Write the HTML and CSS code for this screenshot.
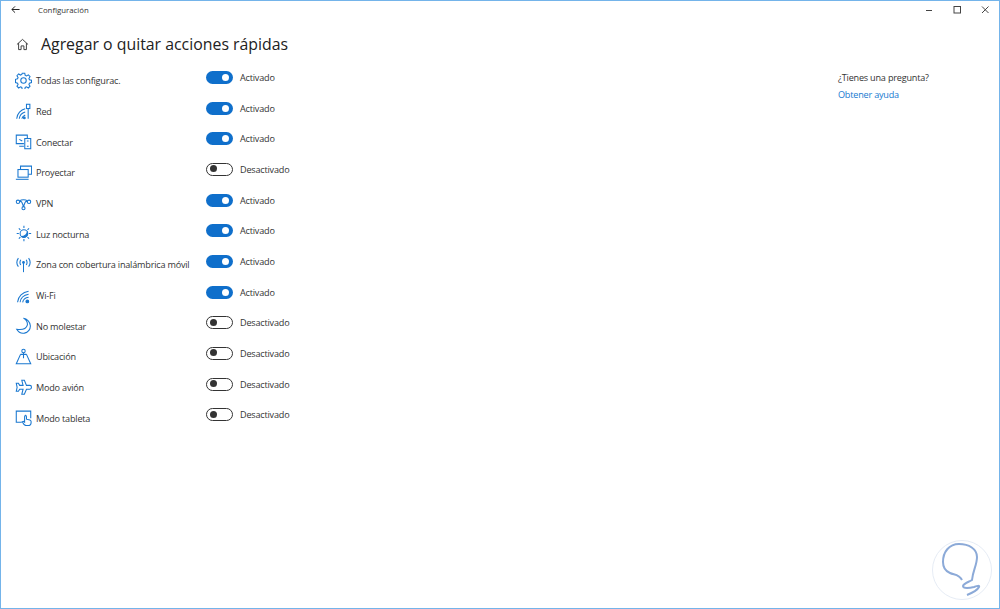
FILE: index.html
```html
<!DOCTYPE html>
<html lang="es">
<head>
<meta charset="utf-8">
<title>Configuración</title>
<link rel="stylesheet" href="styles.css">
</head>
<body>
<div class="window">
  <header class="titlebar">
    <svg class="back" viewBox="0 0 10 10"><path d="M9.500 5H1M4.500 1.500 1 5l3.500 3.500"/></svg>
    <span class="apptitle">Configuración</span>
    <div class="controls">
      <svg viewBox="0 0 8 8"><path d="M1 4.500h6"/></svg>
      <svg viewBox="0 0 8 8"><rect x="1" y=".5" width="6.500" height="6.500"/></svg>
      <svg viewBox="0 0 8 8"><path d="M1 .5l6.500 6.500M7.500 .5 1 7"/></svg>
    </div>
  </header>
  <div class="pagehead">
    <svg class="home" viewBox="0 0 14 14"><path d="M1 7 7 1.500 13 7M2.800 5.500V12.500H5.500V8.500H8.500V12.500H11.200V5.500"/></svg>
    <h1>Agregar o quitar acciones rápidas</h1>
  </div>
  <div class="content">
    <main class="list">
      <div class="row"><svg class="ico" viewBox="0 0 20 20"><path d="M8.500 1.500h3l.5 2.500 1.500.7 2.200-1.300 2 2.100-1.300 2.100.6 1.500 2.400.6v2.800l-2.400.6-.6 1.500 1.300 2.100-2 2.100-2.200-1.300-1.500.7-.5 2.500h-3l-.5-2.500-1.500-.7-2.200 1.300-2-2.100 1.300-2.100-.6-1.500-2.400-.6V8.600l2.400-.6.6-1.500-1.300-2.100 2-2.100 2.200 1.300 1.500-.7z"/><circle cx="10" cy="10" r="3.200"/></svg><span class="label">Todas las configurac.</span><span class="toggle on"></span><span class="state">Activado</span></div>
      <div class="row"><svg class="ico" viewBox="0 0 20 20"><path d="M2 18.500C2.500 12.500 7 8 12 6.800M5 18.500C5.500 14.500 8.500 11.500 12 10.500M8 18.500C8.500 16.500 10.300 14.800 12 14"/><circle class="solid" cx="11" cy="17.500" r="1"/><rect x="13.500" y="1.500" width="4" height="5"/><path d="M15.500 6.500v12"/></svg><span class="label">Red</span><span class="toggle on"></span><span class="state">Activado</span></div>
      <div class="row"><svg class="ico" viewBox="0 0 20 20"><path d="M10.500 12.500H1.500V2.500H14.500V6M5 15.500h5.500"/><path d="M5 7.500 8.500 9.500"/><rect x="11.500" y="6.500" width="7" height="12"/><path d="M14 9.500h2M14 15.500h2"/></svg><span class="label">Conectar</span><span class="toggle on"></span><span class="state">Activado</span></div>
      <div class="row"><svg class="ico" viewBox="0 0 20 20"><path d="M6.500 6V2.500H19.500V12H15.500"/><rect x="3.500" y="6.500" width="12" height="9"/><path d="M1 18H16"/></svg><span class="label">Proyectar</span><span class="toggle off"></span><span class="state">Desactivado</span></div>
      <div class="row"><svg class="ico" viewBox="0 0 20 20"><circle cx="3.500" cy="8" r="2"/><circle cx="16.500" cy="8" r="2"/><circle cx="10" cy="15.500" r="1.800"/><path d="M5.500 8C8 6 8.500 10 10 13.500M14.500 8C12 6 11.500 10 10 13.500M5.500 7C7.500 5 12.500 5 14.500 7"/></svg><span class="label">VPN</span><span class="toggle on"></span><span class="state">Activado</span></div>
      <div class="row"><svg class="ico" viewBox="0 0 20 20"><circle cx="10.500" cy="10" r="4.500"/><path class="solid" d="M7.500 13.500C11 13.500 14.500 11 14.500 7.500 16 11 13 15 9.500 14.500Z"/><path d="M10.500 1v2.500M10.500 16.500V19M2 10h2.500M16.500 10H19M4.500 4l1.800 1.800M16.500 4l-1.800 1.800M4.500 16l1.800-1.800M16.500 16l-1.800-1.800"/></svg><span class="label">Luz nocturna</span><span class="toggle on"></span><span class="state">Activado</span></div>
      <div class="row"><svg class="ico" viewBox="0 0 20 20"><path d="M10 8V19"/><circle class="solid" cx="10" cy="7.500" r="1"/><path d="M6.800 4.500C5.500 6.500 5.500 8.500 6.800 10.500M13.200 4.500C14.500 6.500 14.500 8.500 13.200 10.500M4 2.500C1.800 5.500 1.800 9.500 4 12.500M16 2.500C18.200 5.500 18.200 9.500 16 12.500"/></svg><span class="label">Zona con cobertura inalámbrica móvil</span><span class="toggle on"></span><span class="state">Activado</span></div>
      <div class="row"><svg class="ico" viewBox="0 0 20 20"><path d="M3 18C3.500 11 9 6 16 5M6 18C6.500 13 10.500 9.500 16 8.500M9 18C9.500 15 12 12.500 16 12"/><circle class="solid" cx="14.500" cy="17" r="1.600"/></svg><span class="label">Wi-Fi</span><span class="toggle on"></span><span class="state">Activado</span></div>
      <div class="row"><svg class="ico" viewBox="0 0 20 20"><path d="M10 1.500C13.500 3 15 7 14.500 9.500 13.500 13 9 15.500 2 14.500 4 18 8 19.500 11 19 15.500 18.500 18.500 14 18 10 17.500 5.500 14 2 10 1.500Z"/></svg><span class="label">No molestar</span><span class="toggle off"></span><span class="state">Desactivado</span></div>
      <div class="row"><svg class="ico" viewBox="0 0 20 20"><circle cx="10" cy="3.500" r="2"/><path d="M10 5.500V12M6.500 7.500H13.500M6.500 7.500 1.500 18.500H18.500L13.500 7.500"/></svg><span class="label">Ubicación</span><span class="toggle off"></span><span class="state">Desactivado</span></div>
      <div class="row"><svg class="ico" viewBox="0 0 20 20"><path d="M8 1.500H11L13.500 7.500H17.500C20 7.500 20 12 17.500 12H13.500L11 18H8L9.500 12H5.500L4 14.500H1.500L2.500 9.800 1.500 5H4L5.500 7.500H9.500Z"/></svg><span class="label">Modo avión</span><span class="toggle off"></span><span class="state">Desactivado</span></div>
      <div class="row"><svg class="ico" viewBox="0 0 20 20"><path d="M8 15.500H1.500V2.500H18.500V11"/><path class="hand" d="M12 7.500c1 0 1.500.5 1.500 1.500v3l4 1c1 .5 1.500 1 1.500 2 0 2-1 4.500-3 4.500h-3c-1.500 0-3.500-2.500-4.500-4.500l1.500-.5 1.300 1V9c0-1 .7-1.500 1.700-1.500z"/></svg><span class="label">Modo tableta</span><span class="toggle off"></span><span class="state">Desactivado</span></div>
    </main>
    <aside class="help">
      <p class="q">¿Tienes una pregunta?</p>
      <a class="link" href="#">Obtener ayuda</a>
    </aside>
  </div>
  <svg class="mark" viewBox="0 0 60 60"><circle class="ring" cx="30" cy="30" r="29.500"/><path class="s" d="M30 40C27 34 22 35 18 33 13 31 11 27 11 22 11 12 17 4 27 4 37 4 45 9 45 17 45 25 41 30 40 40 37 42 32 43 31 46 31 49 38 48 42 47 45 46 48 45 47 47 45 51 40 53 35 55"/></svg>
</div>
</body>
</html>
```
FILE: styles.css
```css
* { box-sizing: border-box; }
html, body { margin: 0; height: 100%; }
body { font-family: "Open Sans", "Noto Sans", sans-serif; color: #2b2b2b; background: #fff; }
.window { position: relative; width: 1000px; height: 609px; border: 1px solid #74b4ea; overflow: hidden; display: flex; flex-direction: column; background: #fff; }
.titlebar { height: 17px; display: flex; align-items: center; flex: none; }
.back { width: 9px; height: 9px; margin-left: 10px; fill: none; stroke: #222; stroke-width: 1.100; }
.apptitle { margin-left: 18px; font-size: 7.800px; color: #333; }
.controls { margin-left: auto; display: flex; gap: 20px; padding-right: 10px; }
.controls svg { width: 8px; height: 8px; fill: none; stroke: #444; stroke-width: 1; }
.pagehead { display: flex; align-items: center; height: 32px; margin-top: 10px; flex: none; }
.home { width: 13px; height: 13px; margin-left: 15px; fill: none; stroke: #333; stroke-width: 1; }
h1 { margin: 0 0 0 12px; font-size: 15.860px; font-weight: 400; color: #222; white-space: nowrap; }
.content { display: flex; flex: 1; padding-top: 2px; }
.list { width: 837px; display: grid; grid-auto-rows: 30.680px; align-content: start; }
.row { display: flex; align-items: center; font-size: 9.100px; letter-spacing: -.2px; color: #333; padding-left: 14px; }
.ico { width: 17px; height: 17px; flex: none; fill: none; stroke: #1a78d0; stroke-width: 1.250; position: relative; top: 3px; }
.ico .solid { fill: #1a78d0; }
.ico .hand { fill: #fff; }
.label { width: 169px; margin-left: 4px; padding-top: 7px; white-space: nowrap; flex: none; }
.toggle { width: 27px; height: 13px; border-radius: 7px; position: relative; flex: none; margin-left: 1px; }
.toggle::after { content: ""; position: absolute; width: 7px; height: 7px; border-radius: 50%; top: 3px; }
.toggle.on { background: #0f6fcb; }
.toggle.on::after { background: #fff; right: 4px; }
.toggle.off { border: 1.500px solid #333; background: #fff; }
.toggle.off::after { background: #333; left: 2.500px; top: 1.500px; }
.state { margin-left: 7px; white-space: nowrap; }
.help { font-size: 9.100px; letter-spacing: -.2px; padding-top: 9px; }
.q { margin: 0 0 4px; color: #333; }
.link { color: #1679d0; text-decoration: none; }
.mark { position: absolute; left: 931px; top: 539px; width: 60px; height: 60px; fill: none; }
.ring { stroke: #e6ecf5; stroke-width: 1; }
.s { stroke: #8caad8; stroke-width: 2; }
```
